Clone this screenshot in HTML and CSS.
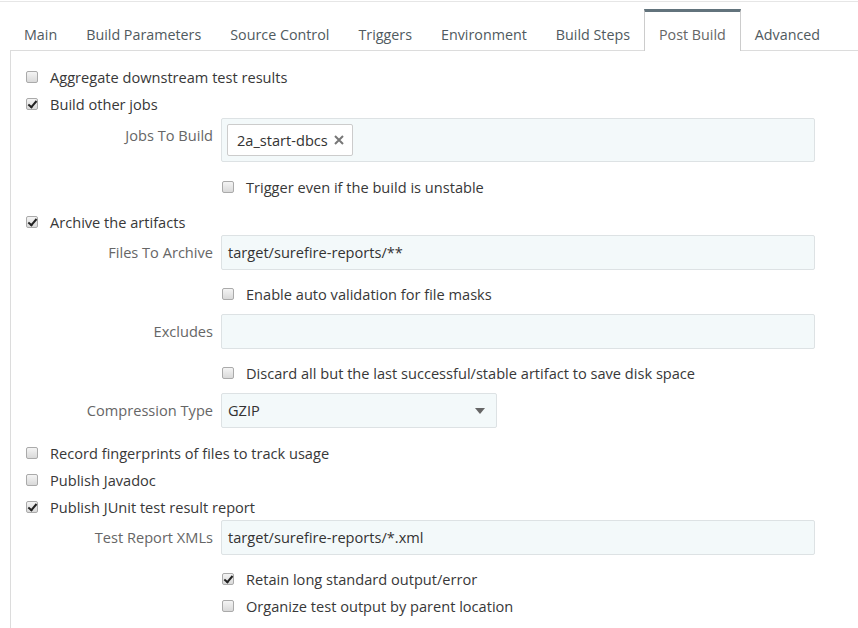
FILE: index.html
```html
<!DOCTYPE html>
<html>
<head>
<meta charset="utf-8">
<link rel="stylesheet" href="styles.css">
</head>
<body>
<div class="topline"></div>
<div class="wrap">
  <ul class="tabs">
    <li class="tab">Main</li>
    <li class="tab">Build Parameters</li>
    <li class="tab">Source Control</li>
    <li class="tab">Triggers</li>
    <li class="tab">Environment</li>
    <li class="tab">Build Steps</li>
    <li class="tab active">Post Build</li>
    <li class="tab">Advanced</li>
  </ul>
  <div class="panel">
    <div class="check"><span class="cb"></span><span class="lbl">Aggregate downstream test results</span></div>
    <div class="check"><span class="cb on"></span><span class="lbl">Build other jobs</span></div>
    <div class="field-row jobs">
      <div class="flabel">Jobs To Build</div>
      <div class="field tags"><span class="tag">2a_start-dbcs <svg class="x" width="10" height="10" viewBox="0 0 10 10"><path d="M1 1L9 9M9 1L1 9" stroke="#777" stroke-width="2" fill="none"/></svg></span></div>
    </div>
    <div class="check sub"><span class="cb"></span><span class="lbl">Trigger even if the build is unstable</span></div>

    <div class="check sep"><span class="cb on"></span><span class="lbl">Archive the artifacts</span></div>
    <div class="field-row">
      <div class="flabel">Files To Archive</div>
      <div class="field">target/surefire-reports/**</div>
    </div>
    <div class="check sub"><span class="cb"></span><span class="lbl">Enable auto validation for file masks</span></div>
    <div class="field-row after-sub">
      <div class="flabel">Excludes</div>
      <div class="field"></div>
    </div>
    <div class="check sub"><span class="cb"></span><span class="lbl">Discard all but the last successful/stable artifact to save disk space</span></div>
    <div class="field-row after-sub sel-row">
      <div class="flabel">Compression Type</div>
      <div class="field select">GZIP<span class="arrow"></span></div>
    </div>

    <div class="check"><span class="cb"></span><span class="lbl">Record fingerprints of files to track usage</span></div>
    <div class="check"><span class="cb"></span><span class="lbl">Publish Javadoc</span></div>
    <div class="check"><span class="cb on"></span><span class="lbl">Publish JUnit test result report</span></div>
    <div class="field-row">
      <div class="flabel">Test Report XMLs</div>
      <div class="field">target/surefire-reports/*.xml</div>
    </div>
    <div class="check sub"><span class="cb on"></span><span class="lbl">Retain long standard output/error</span></div>
    <div class="check sub"><span class="cb"></span><span class="lbl">Organize test output by parent location</span></div>
  </div>
</div>
</body>
</html>
```
FILE: styles.css
```css
* { box-sizing: border-box; }
html, body { margin: 0; padding: 0; background: #fff; }
body {
  font-family: "Open Sans", "Noto Sans", sans-serif;
  font-size: 14.6px;
  color: #333;
  height: 628px;
  overflow: hidden;
}
.topline { height: 1px; margin-top: 1px; background: #e6e6e6; }
.wrap { margin-left: 10px; }
.tabs {
  list-style: none;
  margin: 0;
  padding: 7px 0 0 0;
  display: flex;
  border-bottom: 1px solid #dcdcdc;
  font-size: 14.3px;
}
.tab {
  margin-left: -1px;
  margin-bottom: -1px;
  padding: 13px 14px 5px;
  line-height: 20px;
  color: #505a60;
  border: 1px solid transparent;
  border-top: 3px solid transparent;
  border-bottom: none;
  height: 41px;
}
.tab.active {
  border-color: #ccc;
  border-top-color: #62737c;
  background: #fff;
  color: #666;
  height: 42px;
}
.panel {
  border-left: 1px solid #dcdcdc;
  padding: 12px 0 0 14px;
  height: 600px;
}
.check {
  height: 27px;
  display: flex;
  align-items: center;
}
.check.sub { padding-left: 196px; }
.check.sep { margin-top: 8px; }
.cb {
  width: 12px;
  height: 12px;
  margin-left: 1px;
  margin-right: 12px;
  border: 1px solid #aaa;
  border-radius: 2px;
  background: linear-gradient(#f4f4f4, #d9d9d9);
  position: relative;
  flex: none;
}
.cb.on::after {
  content: "";
  position: absolute;
  left: 3px;
  top: 0px;
  width: 3px;
  height: 7px;
  border: solid #222;
  border-width: 0 2px 2px 0;
  transform: rotate(40deg);
}
.lbl { color: #383838; line-height: 20px; }
.field-row {
  display: flex;
  margin-bottom: 10px;
}
.field-row.jobs { margin-top: 1px; margin-bottom: 11px; }
.field-row.after-sub { margin-top: 7px; }
.field-row.sel-row { margin-bottom: 11px; }
.flabel {
  width: 196px;
  padding-right: 8px;
  text-align: right;
  color: #666;
  line-height: 35px;
  flex: none;
}
.field {
  width: 594px;
  height: 35px;
  border: 1px solid #dde2e4;
  border-radius: 2px;
  background: #f3f9fa;
  padding: 0 6px;
  line-height: 33px;
  color: #333;
}
.field.tags {
  height: 44px;
  padding: 5px;
}
.tag {
  display: inline-flex;
  align-items: center;
  height: 32px;
  padding: 0 8px 0 9px;
  border: 1px solid #ccc;
  border-radius: 2px;
  background: #fff;
  line-height: 30px;
  color: #333;
}
.tag .x { margin-left: 6px; }
.field.select {
  width: 276px;
  position: relative;
}
.arrow {
  position: absolute;
  right: 11px;
  top: 14px;
  width: 0;
  height: 0;
  border-left: 5px solid transparent;
  border-right: 5px solid transparent;
  border-top: 6px solid #666;
}
```
